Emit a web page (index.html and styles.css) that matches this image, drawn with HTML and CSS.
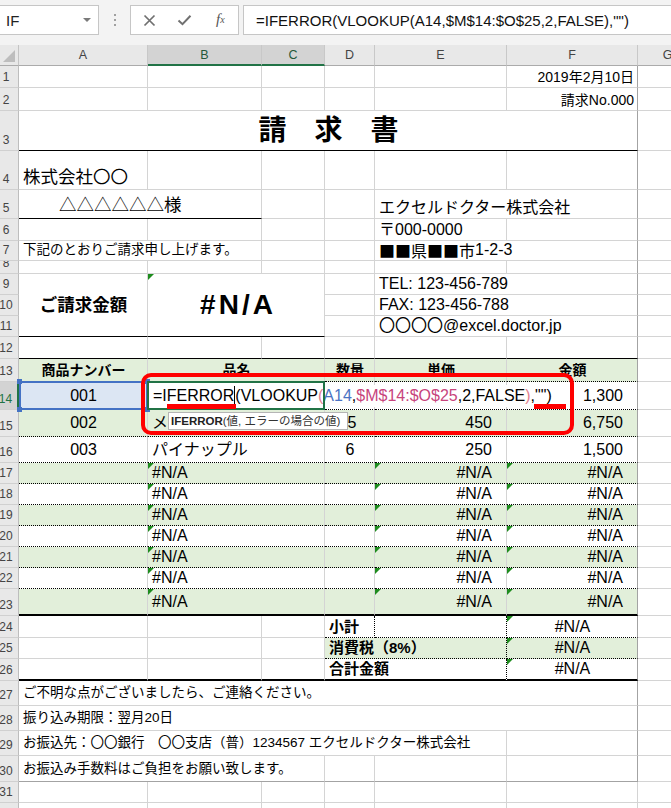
FILE: index.html
```html
<!DOCTYPE html>
<html lang="ja">
<head>
<meta charset="utf-8">
<title>請求書</title>
<link rel="stylesheet" href="styles.css">
</head>
<body>
<div class="app">
  <div class="fbar">
    <div class="namebox"><span>IF</span><span class="nb-arrow"></span></div>
    <div class="grip"><i></i><i></i><i></i></div>
    <div class="btns">
      <span class="btn"><svg width="13" height="13" viewBox="0 0 13 13"><path d="M1.5 1.5 L11.5 11.5 M11.5 1.5 L1.5 11.5" stroke="#707070" stroke-width="1.7" fill="none"/></svg></span>
      <span class="btn"><svg width="15" height="12" viewBox="0 0 15 12"><path d="M1.5 6.5 L5.5 10.2 L13.5 1.8" stroke="#707070" stroke-width="2" fill="none"/></svg></span>
      <span class="btn fx">f<sub>x</sub></span>
    </div>
    <div class="formula">=IFERROR(VLOOKUP(A14,$M$14:$O$25,2,FALSE),"")</div>
  </div>

  <div class="sheet">
    <div class="grid">
      <div class="corner"></div>
      <div class="ch">A</div><div class="ch sel">B</div><div class="ch sel">C</div><div class="ch">D</div><div class="ch">E</div><div class="ch">F</div><div class="ch">G</div>

      <div class="rh">1</div><div class="c"></div><div class="c"></div><div class="c"></div><div class="c"></div><div class="c"></div><div class="c rt f14 pr">2019年2月10日</div><div class="c gc"></div>
      <div class="rh">2</div><div class="c"></div><div class="c"></div><div class="c"></div><div class="c"></div><div class="c"></div><div class="c rt f14 pr">請求No.000</div><div class="c gc"></div>
      <div class="rh">3</div><div class="c x6 ctr kb pr title">請　求　書</div><div class="c gc"></div>
      <div class="rh">4</div><div class="c f175 co">株式会社〇〇</div><div class="c"></div><div class="c"></div><div class="c"></div><div class="c"></div><div class="c pr"></div><div class="c gc"></div>
      <div class="rh">5</div><div class="c x2 kb f175 indent">△△△△△△様</div><div class="c"></div><div class="c"></div><div class="c x2 pr">エクセルドクター株式会社</div><div class="c gc"></div>
      <div class="rh">6</div><div class="c"></div><div class="c"></div><div class="c"></div><div class="c"></div><div class="c">〒000-0000</div><div class="c pr"></div><div class="c gc"></div>
      <div class="rh">7</div><div class="c x2 f135">下記のとおりご請求申し上げます。</div><div class="c"></div><div class="c"></div><div class="c x2 pr"><span class="cjk">■■県■■市</span>1-2-3</div><div class="c gc"></div>
      <div class="rh">8</div><div class="c"></div><div class="c"></div><div class="c"></div><div class="c"></div><div class="c"></div><div class="c pr"></div><div class="c gc"></div>
      <div class="rh">9</div><div class="c y3 t ctr kb B f175">ご請求金額</div><div class="c x2 y3 t ctr kb err big">#N/A</div><div class="c"></div><div class="c x2 pr">TEL: 123-456-789</div><div class="c gc"></div>
      <div class="rh">10</div><div class="c"></div><div class="c x2 pr">FAX: 123-456-788</div><div class="c gc"></div>
      <div class="rh">11</div><div class="c"></div><div class="c x2 pr">〇〇〇〇@excel.doctor.jp</div><div class="c gc"></div>
      <div class="rh">12</div><div class="c kb"></div><div class="c kb"></div><div class="c kb"></div><div class="c kb"></div><div class="c kb"></div><div class="c kb pr"></div><div class="c gc"></div>

      <div class="rh">13</div><div class="c t g db ctr B f14">商品ナンバー</div><div class="c x2 t g db ctr B f14">品名</div><div class="c t g db ctr B f14">数量</div><div class="c t g db ctr B f14">単価</div><div class="c t g db ctr B f14 pr">金額</div><div class="c gc"></div>
      <div class="rh sel">14</div>
      <div class="c t db ctr refcell">001<span class="ref"><i class="k1"></i><i class="k2"></i><i class="k3"></i><i class="k4"></i></span></div>
      <div class="c x2 t db edit"><span class="etext">=IFERROR<i class="caret"></i>(VLOOKUP<span class="pk">(</span><span class="bl">A14</span>,<span class="rdc">$M$14:$O$25</span>,2,FALSE<span class="pk">)</span>,"")</span></div>
      <div class="c t db"></div><div class="c t db"></div><div class="c t db rt nr pr">1,300</div><div class="c gc"></div>
      <div class="rh">15</div><div class="c t g db ctr">002</div><div class="c x2 t g db">メロン</div><div class="c t g db ctr d5">5</div><div class="c t g db rt nr">450</div><div class="c t g db rt nr pr">6,750</div><div class="c gc"></div>
      <div class="rh">16</div><div class="c t db ctr">003</div><div class="c x2 t db">パイナップル</div><div class="c t db ctr">6</div><div class="c t db rt nr">250</div><div class="c t db rt nr pr">1,500</div><div class="c gc"></div>
      <div class="rh">17</div><div class="c t g db"></div><div class="c x2 t g db err">#N/A</div><div class="c t g db"></div><div class="c t g db rt nr err">#N/A</div><div class="c t g db rt nr err pr">#N/A</div><div class="c gc"></div>
      <div class="rh">18</div><div class="c t db"></div><div class="c x2 t db err">#N/A</div><div class="c t db"></div><div class="c t db rt nr err">#N/A</div><div class="c t db rt nr err pr">#N/A</div><div class="c gc"></div>
      <div class="rh">19</div><div class="c t g db"></div><div class="c x2 t g db err">#N/A</div><div class="c t g db"></div><div class="c t g db rt nr err">#N/A</div><div class="c t g db rt nr err pr">#N/A</div><div class="c gc"></div>
      <div class="rh">20</div><div class="c t db"></div><div class="c x2 t db err">#N/A</div><div class="c t db"></div><div class="c t db rt nr err">#N/A</div><div class="c t db rt nr err pr">#N/A</div><div class="c gc"></div>
      <div class="rh">21</div><div class="c t g db"></div><div class="c x2 t g db err">#N/A</div><div class="c t g db"></div><div class="c t g db rt nr err">#N/A</div><div class="c t g db rt nr err pr">#N/A</div><div class="c gc"></div>
      <div class="rh">22</div><div class="c t db"></div><div class="c x2 t db err">#N/A</div><div class="c t db"></div><div class="c t db rt nr err">#N/A</div><div class="c t db rt nr err pr">#N/A</div><div class="c gc"></div>
      <div class="rh">23</div><div class="c t g kb2"></div><div class="c x2 t g kb2 err">#N/A</div><div class="c t g kb2"></div><div class="c t g kb2 rt nr err">#N/A</div><div class="c t g kb2 rt nr err pr">#N/A</div><div class="c gc"></div>

      <div class="rh">24</div><div class="c"></div><div class="c"></div><div class="c"></div><div class="c t B f15 db dr">小計</div><div class="c db dr"></div><div class="c t ctr err db pr">#N/A</div><div class="c gc"></div>
      <div class="rh">25</div><div class="c"></div><div class="c"></div><div class="c"></div><div class="c x2 t B f15 g db dr">消費税（8%）</div><div class="c t ctr g err db pr">#N/A</div><div class="c gc"></div>
      <div class="rh">26</div><div class="c kb2"></div><div class="c kb2"></div><div class="c kb2"></div><div class="c x2 t B f15 kb2 dr">合計金額</div><div class="c t ctr err kb2 pr">#N/A</div><div class="c gc"></div>

      <div class="rh">27</div><div class="c x6 t f135 pr">ご不明な点がございましたら、ご連絡ください。</div><div class="c gc"></div>
      <div class="rh">28</div><div class="c x6 t f135 pr">振り込み期限：翌月20日</div><div class="c gc"></div>
      <div class="rh">29</div><div class="c x5 t f135">お振込先：〇〇銀行　〇〇支店（普）1234567 エクセルドクター株式会社</div><div class="c pr"></div><div class="c gc"></div>
      <div class="rh">30</div><div class="c x3 t f135 pb">お振込み手数料はご負担をお願い致します。</div><div class="c pb"></div><div class="c pb"></div><div class="c pb pr"></div><div class="c gc"></div>
      <div class="rh">31</div><div class="c"></div><div class="c"></div><div class="c"></div><div class="c"></div><div class="c"></div><div class="c"></div><div class="c gc"></div>
      <div class="rh">32</div><div class="c"></div><div class="c"></div><div class="c"></div><div class="c"></div><div class="c"></div><div class="c"></div><div class="c gc"></div>
    </div>

    <div class="tip"><b>IFERROR</b>(値, エラーの場合の値)</div>
    <div class="redbox"></div>
    <div class="bar bar1"></div>
    <div class="bar bar2"></div>
  </div>
</div>
</body>
</html>
```

FILE: styles.css
```css
* { box-sizing: border-box; margin: 0; padding: 0; }
html, body { width: 671px; height: 808px; overflow: hidden; background: #fff; }
body { font-family: "Liberation Sans", "Noto Sans CJK JP", sans-serif; color: #000; }
.app { width: 671px; overflow: hidden; }

/* formula bar */
.fbar { height: 45px; background: #f3f3f3; display: flex; align-items: flex-start; padding-top: 5px; }
.namebox { width: 99px; height: 30px; background: #fff; border: 1px solid #c6c6c6; border-left: none;
  display: flex; align-items: center; justify-content: space-between; padding: 0 7px 0 6px; font-size: 15px; color: #222; }
.nb-arrow { width: 0; height: 0; border-left: 4px solid transparent; border-right: 4px solid transparent; border-top: 4px solid #7a7a7a; }
.grip { width: 31px; height: 30px; display: flex; flex-direction: column; align-items: center; justify-content: center; gap: 3px; }
.grip i { display: block; width: 2px; height: 2px; background: #a0a0a0; }
.btns { width: 109px; height: 30px; background: #fff; border: 1px solid #c6c6c6; display: flex; align-items: center; padding-left: 1px; }
.btn { width: 36px; height: 28px; display: flex; align-items: center; justify-content: center; }
.fx { font-family: "Liberation Serif", serif; font-style: italic; font-size: 15px; color: #555; padding-bottom: 2px; }
.fx sub { font-size: 10px; vertical-align: -2px; }
.formula { flex: 1; margin-left: 4px; height: 30px; background: #fff; border: 1px solid #c6c6c6; border-right: none;
  padding-left: 12px; font-size: 15px; display: flex; align-items: center; white-space: nowrap; overflow: hidden; color: #111; }

/* sheet */
.sheet { position: relative; }
.grid { display: grid; width: 698px;
  grid-template-columns: 19px 129px 114px 63px 50px 132px 131px 60px;
  grid-template-rows: 21px 22px 23px 40px 39px 29px 22px 20px 13px 21px 21px 21px 22px 23px 28px 27px 26px 21px 21px 21px 21px 21px 21px 27px 22px 21px 22px 25px 25px 25px 26px 21px 21px; }

.corner { background: #e8e8e8; border-right: 1px solid #c4c4c4; border-bottom: 1px solid #ababab; position: relative; }
.corner::after { content: ""; position: absolute; right: 3px; bottom: 3px; width: 0; height: 0;
  border-left: 12px solid transparent; border-bottom: 12px solid #bdbdbd; }
.ch { background: #e8e8e8; border-right: 1px solid #c8c8c8; border-bottom: 1px solid #ababab; font-size: 12.5px; color: #444;
  display: flex; align-items: center; justify-content: center; }
.ch.sel { background: #d3d3d3; border-bottom: 2px solid #217346; color: #24583a; }

.rh { background: #e8e8e8; border-right: 1px solid #bdbdbd; border-bottom: 1px solid #d0d0d0; font-size: 12px; line-height: 14px; color: #444;
  display: flex; justify-content: center; align-items: flex-end; padding: 0 6px 3px 0; overflow: hidden; }
.rh.sel { background: #d3d3d3; border-right: 2px solid #217346; color: #217346; }

.c { border-right: 1px solid #d4d4d4; border-bottom: 1px solid #d4d4d4; display: flex; align-items: flex-end;
  padding: 0 3px 1px 4px; font-size: 16px; line-height: 18px; white-space: nowrap; }
.gc { border-right: none; }
.cjk { font-family: "Noto Sans CJK JP", sans-serif; }
.x2 { grid-column: span 2; }
.x3 { grid-column: span 3; }
.x5 { grid-column: span 5; }
.x6 { grid-column: span 6; }
.y3 { grid-row: span 3; }
.t { align-items: center; padding-bottom: 0; }
.ctr { justify-content: center; }
.rt { justify-content: flex-end; }
.nr { padding-right: 14px; }
.d5 { padding-left: 8px; }
.B { font-weight: bold; }
.g { background: #e2efda; }
.f14 { font-size: 14px; }
.f135 { font-size: 13.5px; }
.f15 { font-size: 15px; }
.f175 { font-size: 17.5px; }
.co { padding-bottom: 3px; }
.indent { padding-left: 40px; padding-bottom: 4px; }
.title { font-size: 28px; line-height: 28px; font-weight: bold; padding-bottom: 5px; }
.big { font-size: 28px; line-height: 32px; font-weight: bold; letter-spacing: 3px; padding-left: 7px; }

.kb { border-bottom: 1px solid #000; }
.kb2 { border-bottom: 2px solid #000; }
.db { border-bottom: 1px dotted #000; }
.dr { border-right: 1px dotted #000; }
.pr { border-right-color: #a3a3a3; }
.pb { border-bottom-color: #a3a3a3; }

.err { position: relative; }
.err::before { content: ""; position: absolute; left: 0; top: 0; width: 0; height: 0;
  border-top: 6px solid #1e8c1e; border-right: 6px solid transparent; }

/* reference highlight on A14 */
.refcell { position: relative; background: #dce6f3; }
.ref { position: absolute; left: 0; top: -1px; right: -1px; bottom: -1px; border: 2px solid #4472c4; }
.ref i { position: absolute; width: 5px; height: 5px; background: #4472c4; }
.ref .k1 { left: -4px; top: -4px; }
.ref .k2 { right: -4px; top: -4px; }
.ref .k3 { left: -4px; bottom: -4px; }
.ref .k4 { right: -4px; bottom: -4px; }

/* cell in edit mode */
.edit { position: relative; z-index: 2; background: #fff; padding-left: 5px; overflow: visible; }
.edit::after { content: ""; position: absolute; left: -1px; top: -1px; right: -1px; bottom: -1px; border: 2px solid #217346; }
.etext { background: #fff; white-space: nowrap; line-height: 22px; }
.caret { display: inline-block; width: 1px; height: 19px; background: #000; vertical-align: -4px; }
.bl { color: #4a72c2; }
.rdc { color: #c7447c; }
.pk { color: #e47f8f; }

/* overlays */
.tip { position: absolute; left: 168px; top: 367px; width: 180px; height: 18px; z-index: 4; background: #fff; border: 1px solid #b5b5b5;
  font-size: 11.5px; line-height: 16px; padding: 0 2px; white-space: nowrap; overflow: hidden; color: #333; }
.tip b { color: #222; }
.redbox { position: absolute; left: 141px; top: 328px; width: 433px; height: 62px; z-index: 5;
  border: 4px solid #ff0000; border-radius: 10px; }
.bar { position: absolute; z-index: 5; height: 5px; background: #ff0000; top: 359px; }
.bar1 { left: 167px; width: 69px; }
.bar2 { left: 534px; width: 32px; }
```
